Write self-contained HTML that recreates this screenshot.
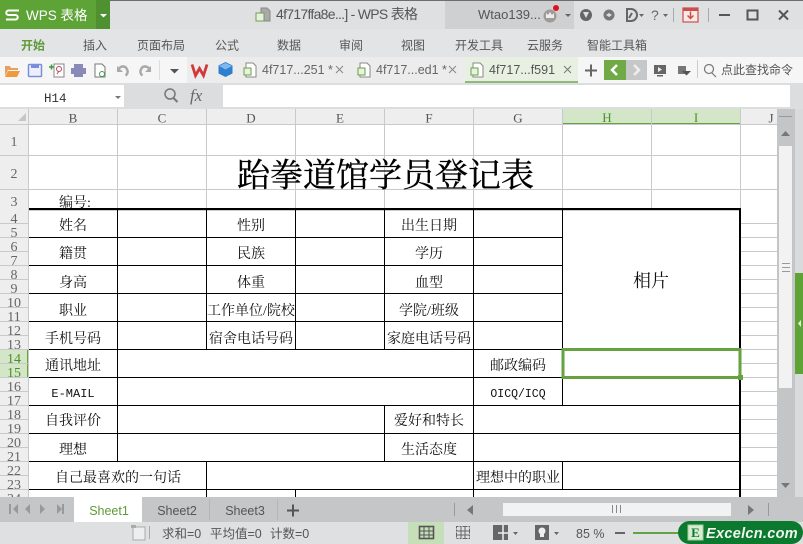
<!DOCTYPE html>
<html><head><meta charset="utf-8">
<style>
html,body{margin:0;padding:0;background:#fff}
#p{position:relative;width:803px;height:544px;overflow:hidden;background:#e2e3e4}
svg{position:absolute;left:0;top:0}
.u{font-family:"Liberation Sans","Noto Sans CJK SC",sans-serif}
.s{font-family:"Liberation Serif","Noto Serif CJK SC",serif}
.m{font-family:"Liberation Mono","Noto Sans CJK SC",monospace}
</style></head><body><div id="p">
<svg width="803" height="544" viewBox="0 0 803 544" xmlns="http://www.w3.org/2000/svg">
<!-- title bar -->
<rect width="803" height="29" fill="#dfe0e1"/>
<rect width="803" height="1" fill="#6e6e6e"/>
<rect x="445" y="1" width="129" height="28" fill="#cfd0d1"/>
<rect y="0" width="110" height="29" fill="#5da336"/>
<rect x="96" y="0" width="14" height="29" fill="#4f9030"/>
<path d="M19 10.500H8.500a2 2 0 0 0 0 4.500h7a2 2 0 0 1 0 4.500H6" fill="none" stroke="#fff" stroke-width="2"/>
<text x="26" y="20" class="u" font-size="13.500" fill="#fff">WPS 表格</text>
<path d="M100 14h7l-3.500 3.500z" fill="#fff"/>
<path d="M261 8h6l3 3v10h-9z" fill="#aaa" stroke="#888"/><rect x="256" y="13" width="8" height="8" fill="#e6efe0" stroke="#6fa050"/>
<text x="276" y="19" class="u" font-size="14" fill="#555" textLength="142" lengthAdjust="spacing">4f717ffa8e...] - WPS 表格</text>
<text x="478" y="19" class="u" font-size="13" fill="#555">Wtao139...</text>
<circle cx="550" cy="16" r="6.500" fill="#a09a96"/><path d="M546 13l2 2 2-3 2 3 2-2v5h-8z" fill="#eee"/>
<circle cx="556" cy="8" r="3" fill="#e0101c"/>
<path d="M565 14h6l-3 3z" fill="#666"/>
<circle cx="586" cy="15" r="6" fill="#666"/><path d="M583 12h6l-3 6z" fill="#e0e0e0"/>
<circle cx="609" cy="15" r="5.500" fill="#777"/><path d="M606 15l3-2 3 2-3 2z" fill="#ddd"/>
<path d="M627 9h4a6 6 0 0 1 0 12h-4z" fill="none" stroke="#666" stroke-width="2"/><path d="M629 18l3-5" stroke="#666" stroke-width="2"/>
<path d="M639 14h5l-2.500 3z" fill="#666"/>
<text x="651" y="20" class="u" font-size="14" fill="#666">?</text>
<path d="M663 14h5l-2.500 3z" fill="#666"/>
<rect x="673" y="8" width="1" height="14" fill="#aaa"/>
<rect x="683" y="8" width="15" height="14" fill="#fbe9e7" stroke="#c9504a" stroke-width="1.200"/><rect x="683" y="8" width="15" height="3" fill="#c9504a"/><path d="M690.500 11.500v7m-3-3l3 3 3-3" stroke="#c9504a" stroke-width="1.500" fill="none"/>
<rect x="708" y="8" width="1" height="14" fill="#aaa"/>
<rect x="719" y="14" width="11" height="2" fill="#555"/>
<rect x="747.500" y="10.500" width="10" height="9" fill="none" stroke="#555" stroke-width="2"/>
<path d="M779 10.500l9 9m0-9l-9 9" stroke="#555" stroke-width="2"/>
<!-- ribbon tabs -->
<rect y="29" width="803" height="28" fill="#e3e4e5"/>
<g class="u" font-size="12" fill="#555">
<text x="21" y="49.500" fill="#5f9a3a" font-weight="bold">开始</text>
<text x="83" y="49.500">插入</text>
<text x="137" y="49.500">页面布局</text>
<text x="215" y="49.500">公式</text>
<text x="277" y="49.500">数据</text>
<text x="339" y="49.500">审阅</text>
<text x="401" y="49.500">视图</text>
<text x="455" y="49.500">开发工具</text>
<text x="527" y="49.500">云服务</text>
<text x="587" y="49.500">智能工具箱</text>
</g>
<!-- toolbar -->
<rect y="57" width="803" height="26" fill="#ececed"/>
<rect y="57" width="187" height="26" fill="#f6f6f6"/>
<rect x="578" y="57" width="225" height="26" fill="#f6f6f6"/>
<rect x="159" y="60" width="1" height="20" fill="#ddd"/>
<path d="M5 66h5l1 2h7v2H8l-3 6z" fill="#e8a060"/><path d="M8 71h12l-3 6H5z" fill="#f09a3e"/>
<rect x="28.500" y="64.500" width="13" height="12" rx="1" fill="#eef" stroke="#7a8fd8" stroke-width="1.500"/><rect x="31" y="64" width="8" height="4" fill="#7a8fd8"/>
<path d="M54 64h10v13h-10z" fill="#fff" stroke="#888"/><path d="M49 67h5m-2.500-2.500v5" stroke="#3a9a3a" stroke-width="1.500"/><circle cx="59" cy="69" r="2.500" fill="none" stroke="#c0435a"/><path d="M57 74l2-3" stroke="#c0435a"/>
<rect x="74" y="64" width="9" height="4" fill="#8a8ab8"/><rect x="71" y="68" width="15" height="6" fill="#8a8ab8"/><rect x="74" y="74" width="9" height="3" fill="#8a8ab8"/>
<path d="M95 64h7l3 3v10h-10z" fill="#fff" stroke="#777"/><circle cx="102" cy="74" r="2.500" fill="none" stroke="#4a9a4a"/>
<path d="M118 71a5 5 0 0 1 8-3.500l1.500 3a5 5 0 0 1-2 5" fill="none" stroke="#aaa" stroke-width="2.500"/><path d="M117 66v6h6z" fill="#aaa"/>
<path d="M150 71a5 5 0 0 0-8-3.500l-1.500 3a5 5 0 0 0 2 5" fill="none" stroke="#aaa" stroke-width="2.500"/><path d="M151 66v6h-6z" fill="#aaa"/>
<path d="M170 69h9l-4.500 4.500z" fill="#555"/>
<path d="M192 64.500l3.500 11 4-7 4 7 3.500-11" fill="none" stroke="#d23a3a" stroke-width="2.800"/>
<path d="M225.500 62l7 3.500v8l-7 3.500-7-3.500v-8z" fill="#2f7fd0"/><path d="M219 66l6.500 3.500 6.500-3.500-6.500-3z" fill="#7fb8ee"/>
<path d="M246 63h7l3 3v11h-10z" fill="#fff" stroke="#888"/><rect x="244" y="68" width="7" height="7" fill="#e8f2e0" stroke="#6aa045"/>
<text x="262" y="74" class="u" font-size="12.500" fill="#666">4f717...251 *</text>
<path d="M336 66l7 7m0-7l-7 7" stroke="#888"/>
<path d="M360 63h7l3 3v11h-10z" fill="#fff" stroke="#888"/><rect x="358" y="68" width="7" height="7" fill="#e8f2e0" stroke="#6aa045"/>
<text x="376" y="74" class="u" font-size="12.500" fill="#666">4f717...ed1 *</text>
<path d="M449 66l7 7m0-7l-7 7" stroke="#888"/>
<rect x="465" y="57" width="113" height="26" fill="#e8f0e2"/>
<rect x="465" y="81" width="113" height="2" fill="#8fb87a"/>
<path d="M473 63h7l3 3v11h-10z" fill="#fff" stroke="#888"/><rect x="471" y="68" width="7" height="7" fill="#e8f2e0" stroke="#6aa045"/>
<text x="489" y="74" class="u" font-size="12.500" fill="#555">4f717...f591</text>
<path d="M564 66l7 7m0-7l-7 7" stroke="#777"/>
<path d="M585 70.500h12m-6-6v12" stroke="#666" stroke-width="2"/>
<rect x="604" y="60" width="22" height="20" fill="#6faa47"/>
<rect x="626" y="60" width="21" height="20" fill="#c6c7c8"/>
<path d="M617 65l-5 5 5 5" fill="none" stroke="#fff" stroke-width="2.500"/>
<path d="M634 65l5 5-5 5" fill="none" stroke="#eee" stroke-width="2.500"/>
<rect x="654" y="65" width="12" height="9" fill="#666"/><path d="M658 67l4 2.500-4 2.500z" fill="#eee"/><rect x="657" y="75" width="6" height="1.500" fill="#666"/>
<rect x="678" y="66" width="8" height="8" fill="#777"/><path d="M682 71h9l-4.500 4.500z" fill="#555"/>
<rect x="697" y="60" width="1" height="18" fill="#ccc"/>
<circle cx="709" cy="69" r="4.500" fill="none" stroke="#777" stroke-width="1.200"/><path d="M712 73l4 4" stroke="#777" stroke-width="1.200"/>
<text x="721" y="74" class="u" font-size="12" fill="#555">点此查找命令</text>
<!-- formula bar -->
<rect y="83" width="803" height="26" fill="#dcddde"/>
<rect y="85" width="124" height="22" fill="#fff"/>
<rect x="223" y="85" width="567" height="22" fill="#fff"/>
<text x="44" y="102" class="m" font-size="12.500" fill="#333">H14</text>
<path d="M115 96h6l-3 3z" fill="#777"/>
<circle cx="170" cy="94" r="5" fill="none" stroke="#777" stroke-width="1.500"/><path d="M173.500 98l4 4" stroke="#777" stroke-width="2"/>
<text x="190" y="101" class="s" font-size="17" font-style="italic" fill="#666">fx</text>
<!-- grid area -->
<rect y="109" width="777" height="388" fill="#fff"/>
<rect y="109" width="29" height="388" fill="#eeeeef"/>
<rect y="109" width="777" height="15" fill="#eeeeef"/>
<rect x="562" y="109" width="178" height="15" fill="#d4e6c8"/>
<rect x="562" y="123" width="178" height="2" fill="#66a23f"/>
<rect y="349" width="28" height="28" fill="#d4e6c8"/>
<rect x="27" y="349" width="2" height="28" fill="#66a23f"/>
<path d="M18 121h8v-8z" fill="#c6c6c6"/>
<g stroke="#c8c9ca" stroke-width="1" fill="none">
<path d="M0 124.500H777M0 155.500H777M0 189.500H777"/>
<path d="M28.500 109V497M117.500 109V209M206.500 109V209M295.500 109V209M384.500 109V209M473.500 109V209M562.500 109V209M651.500 109V209M740.500 109V497"/>
<path d="M740 223.500H777M740 237.500H777M740 251.500H777M740 265.500H777M740 279.500H777M740 293.500H777M740 307.500H777M740 321.500H777M740 335.500H777M740 349.500H777M740 363.500H777M740 377.500H777M740 391.500H777M740 405.500H777M740 419.500H777M740 433.500H777M740 447.500H777M740 461.500H777M740 475.500H777M740 489.500H777"/>
<path d="M0 223.500H29M0 237.500H29M0 251.500H29M0 265.500H29M0 279.500H29M0 293.500H29M0 307.500H29M0 321.500H29M0 335.500H29M0 349.500H29M0 363.500H29M0 377.500H29M0 391.500H29M0 405.500H29M0 419.500H29M0 433.500H29M0 447.500H29M0 461.500H29M0 475.500H29M0 489.500H29"/>
</g>
<!-- form borders -->
<g stroke="#000" stroke-width="1" fill="none">
<path d="M29 237.500H562M29 265.500H562M29 293.500H562M29 321.500H562M29 349.500H562M29 377.500H740M29 405.500H740M29 433.500H740M29 461.500H740M29 489.500H740"/>
<path d="M117.500 209V461M206.500 209V349M295.500 209V349M384.500 209V349M473.500 209V405M562.500 209V405M206.500 461V497M473.500 461V497M295.500 489V497M562.500 461V489M384.500 405V461M473.500 405V461"/>
</g>
<rect x="29" y="208" width="712" height="2.200" fill="#000"/>
<rect x="739" y="208" width="2" height="289" fill="#000"/>
<!-- selection -->
<rect x="563" y="349.500" width="177" height="28" fill="none" stroke="#66a23f" stroke-width="3"/>
<rect x="738" y="375" width="5" height="5" fill="#66a23f"/>
<!-- column letters -->
<g class="s" font-size="13" fill="#555" text-anchor="middle">
<text x="73" y="122.500">B</text><text x="162" y="122.500">C</text><text x="251" y="122.500">D</text><text x="340" y="122.500">E</text><text x="429" y="122.500">F</text><text x="518" y="122.500">G</text>
<text x="607" y="122" fill="#4d8f2a">H</text><text x="696" y="122" fill="#4d8f2a">I</text><text x="771" y="122.500">J</text>
</g>
<!-- row numbers -->
<g class="s" font-size="14" fill="#666" text-anchor="middle">
<text x="14" y="146">1</text><text x="14" y="178">2</text><text x="14" y="206">3</text>
<text x="14" y="223">4</text><text x="14" y="237">5</text><text x="14" y="251">6</text><text x="14" y="265">7</text><text x="14" y="279">8</text><text x="14" y="293">9</text><text x="14" y="307">10</text><text x="14" y="321">11</text><text x="14" y="335">12</text><text x="14" y="349">13</text>
<text x="14" y="363" fill="#4d8f2a">14</text><text x="14" y="377" fill="#4d8f2a">15</text>
<text x="14" y="391">16</text><text x="14" y="405">17</text><text x="14" y="419">18</text><text x="14" y="433">19</text><text x="14" y="447">20</text><text x="14" y="461">21</text><text x="14" y="475">22</text><text x="14" y="489">23</text>
<text x="14" y="503">24</text>
</g>
<!-- sheet text -->
<text x="385.500" y="186.500" class="s" font-size="33" fill="#000" stroke="#000" stroke-width=".35" text-anchor="middle">跆拳道馆学员登记表</text>
<g class="s" font-size="14" fill="#111" text-anchor="middle">
<text x="75" y="207">编号:</text>
<text x="73" y="230">姓名</text><text x="251" y="230">性别</text><text x="429" y="230">出生日期</text>
<text x="73" y="258">籍贯</text><text x="251" y="258">民族</text><text x="429" y="258">学历</text>
<text x="73" y="287">身高</text><text x="251" y="287">体重</text><text x="429" y="287">血型</text>
<text x="73" y="315">职业</text><text x="251" y="315">工作单位/院校</text><text x="429" y="315">学院/班级</text>
<text x="73" y="343">手机号码</text><text x="251" y="343">宿舍电话号码</text><text x="429" y="343">家庭电话号码</text>
<text x="73" y="370">通讯地址</text><text x="518" y="370">邮政编码</text>
<text x="73" y="397" class="m" font-size="12">E-MAIL</text><text x="518" y="397" class="m" font-size="11.500">OICQ/ICQ</text>
<text x="73" y="425">自我评价</text><text x="429" y="425">爱好和特长</text>
<text x="73" y="454">理想</text><text x="429" y="454">生活态度</text>
<text x="118" y="482">自己最喜欢的一句话</text><text x="518" y="482">理想中的职业</text>
<text x="651" y="287" font-size="18">相片</text>
</g>
<!-- vertical scrollbar -->
<rect x="777" y="109" width="18" height="388" fill="#c4c5c6"/>
<rect x="779" y="146" width="13" height="242" fill="#f2f2f3"/>
<rect x="779" y="116" width="13" height="1" fill="#999"/>
<path d="M781 136h9l-4.500-5z" fill="#777"/>
<path d="M781 483h9l-4.500 5z" fill="#777"/>
<path d="M782 263.500h8M782 267.500h8M782 271.500h8" stroke="#999"/>
<!-- right strip -->
<rect x="795" y="109" width="8" height="388" fill="#d9dadb"/>
<rect x="795" y="273" width="8" height="101" fill="#5da336"/>
<path d="M801 320v7l-3-3.500z" fill="#eee"/>
<!-- sheet tabs -->
<rect y="497" width="803" height="25" fill="#c5c6c7"/>
<rect x="74" y="497" width="68" height="25" fill="#fff"/>
<rect x="209" y="499" width="1" height="21" fill="#b5b5b5"/><rect x="277" y="499" width="1" height="21" fill="#b5b5b5"/>
<g fill="#999"><rect x="9" y="504" width="2" height="10"/><path d="M18 504l-5 5 5 5zM30 504l-5 5 5 5zM40 504l5 5-5 5zM57 504l5 5-5 5z"/><rect x="62" y="504" width="2" height="10"/></g>
<g class="u" font-size="12.500" text-anchor="middle">
<text x="109" y="515" fill="#5f9a3a">Sheet1</text><text x="177" y="515" fill="#555">Sheet2</text><text x="245" y="515" fill="#555">Sheet3</text>
</g>
<path d="M287 510.500h12m-6-6v12" stroke="#555" stroke-width="2"/>
<!-- h scrollbar -->
<rect x="454" y="503" width="1" height="13" fill="#999"/>
<path d="M473 505v10l-6-5z" fill="#777"/>
<rect x="503" y="503" width="228" height="13" fill="#f2f2f3"/>
<path d="M612.500 505v8M616.500 505v8M620.500 505v8" stroke="#888"/>
<path d="M748 505v10l6-5z" fill="#777"/>
<rect x="768" y="503" width="1" height="13" fill="#999"/>
<!-- status bar -->
<rect y="522" width="803" height="22" fill="#dfe0e1"/>
<rect x="133" y="527" width="12" height="13" fill="#eee" stroke="#aaa"/><rect x="131" y="525" width="5" height="3" fill="#aaa"/>
<rect x="149" y="526" width="1" height="13" fill="#aaa"/>
<text x="162" y="538" class="u" font-size="12.500" fill="#555">求和=0</text>
<text x="210" y="538" class="u" font-size="12.500" fill="#555">平均值=0</text>
<text x="270" y="538" class="u" font-size="12.500" fill="#555">计数=0</text>
<rect x="408" y="522" width="36" height="22" fill="#c5e0b8"/>
<rect x="419.500" y="526.500" width="14" height="12" fill="none" stroke="#555" stroke-width="1.600"/><path d="M419 531h15M419 535h15M424 526v12M429 526v12" stroke="#555"/>
<rect x="456.500" y="526.500" width="13" height="12" fill="none" stroke="#666" stroke-dasharray="2 1"/><path d="M456 531h14M456 535h14M461 526v13M465 526v13" stroke="#666"/>
<rect x="493" y="525" width="15" height="15" fill="#666"/><path d="M498 533h10M503 525v15" stroke="#eee" stroke-width="1.500"/>
<path d="M513 532h5l-2.500 3z" fill="#666"/>
<rect x="535" y="525" width="14" height="15" fill="#666"/><circle cx="542" cy="531" r="3.500" fill="#eee"/><rect x="540" y="534" width="4" height="3" fill="#eee"/>
<path d="M554 532h5l-2.500 3z" fill="#666"/>
<text x="576" y="538" class="u" font-size="12.500" fill="#555">85 %</text>
<rect x="615" y="532" width="10" height="2" fill="#666"/>
<rect x="633" y="532" width="50" height="2" fill="#66a23f"/>
<!-- watermark -->
<rect x="678" y="521" width="125" height="23" rx="11.500" fill="#0b7a2e"/>
<rect x="688" y="525" width="15" height="15" fill="#d7ecd0" stroke="#9fd09a"/>
<text x="695.500" y="537" class="s" font-size="13" font-weight="bold" fill="#0b7a2e" text-anchor="middle">E</text>
<text x="706" y="538" class="u" font-size="14.500" font-weight="bold" font-style="italic" fill="#f2f6f0" letter-spacing=".3">Excelcn.com</text>
</svg>
</div></body></html>
